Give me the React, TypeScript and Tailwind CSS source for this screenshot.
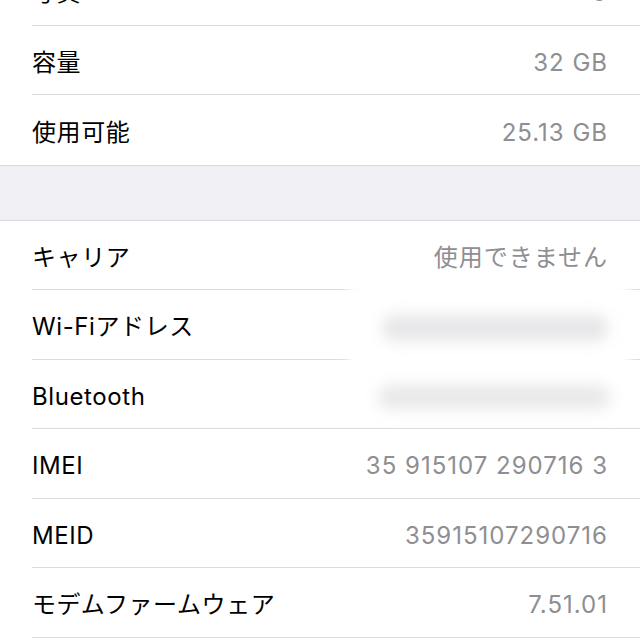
import React from "react";

const font = {
  fontFamily: '"Inter", "Noto Sans CJK JP", sans-serif',
};

function Row({
  label,
  value,
  last,
}: {
  label: string;
  value?: string;
  last?: boolean;
}) {
  return (
    <div className={last ? "border-b border-[#d9d9de]" : "pl-8"}>
      <div
        className={
          "flex h-[69.5px] items-center justify-between pr-8 pt-[6px] " +
          (last ? "pl-8" : "border-b border-[#dcdce0]")
        }
      >
        <span className="text-[24px] tracking-[0.6px] text-black">{label}</span>
        {value !== undefined && (
          <span className="text-[24px] tracking-[1px] text-[#8e8e93]">
            {value}
          </span>
        )}
      </div>
    </div>
  );
}

export default function App() {
  return (
    <div
      className="h-[640px] w-[640px] overflow-hidden bg-white"
      style={font}
    >
      <div className="-mt-[44px] bg-white">
        <Row label="写真" value="0" />
        <Row label="容量" value="32 GB" />
        <Row label="使用可能" value="25.13 GB" last />
      </div>
      <div className="h-[55px] border-b border-[#d9d9de] bg-[#efeff4]" />
      <div className="relative bg-white">
        <Row label="キャリア" value="使用できません" />
        <Row label="Wi-Fiアドレス" />
        <Row label="Bluetooth" />
        <Row label="IMEI" value="35 915107 290716 3" />
        <Row label="MEID" value="35915107290716" />
        <Row label="モデムファームウェア" value="7.51.01" />
        <Row label="" />
        <div className="pointer-events-none absolute left-[348px] top-[62px] h-[132px] w-[282px] bg-white blur-[5px]">
          <div className="absolute left-[34px] top-[32px] h-[26px] w-[226px] rounded-full bg-[#e6e6e8] blur-[6px]" />
          <div className="absolute left-[30px] top-[102px] h-[24px] w-[232px] rounded-full bg-[#e8e8ea] blur-[6px]" />
        </div>
      </div>
    </div>
  );
}
